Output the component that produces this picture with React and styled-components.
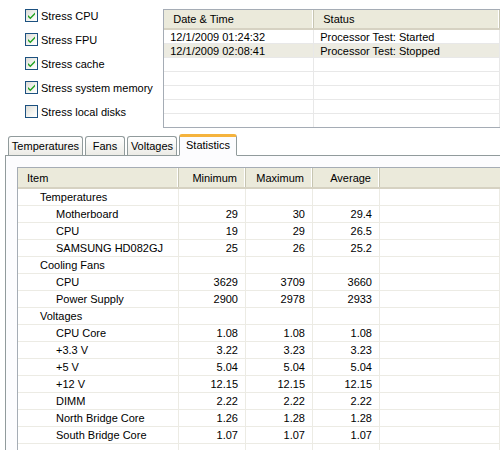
import React from 'react';
import styled, { createGlobalStyle } from 'styled-components';

const Global = createGlobalStyle`
    html, body {
        margin: 0;
        padding: 0;
        background: #fff;
    }
    body {
        width: 500px;
        height: 450px;
        overflow: hidden;
        font-family: Tahoma, "Liberation Sans", Arial, sans-serif;
        font-size: 11px;
        color: #000;
    }
`;

const Window = styled.div`
    width: 500px;
    height: 450px;
    overflow: hidden;
    background: #fff;
`;

const Top = styled.div`
    display: flex;
    height: 132px;
`;

const Checks = styled.div`
    width: 140px;
    padding: 9px 0 0 25px;
    display: flex;
    flex-direction: column;
    gap: 11px;
`;

const CheckRow = styled.label`
    display: flex;
    align-items: center;
    gap: 3px;
    height: 13px;
    white-space: nowrap;
`;

const Box = styled.span`
    width: 11px;
    height: 11px;
    border: 1px solid #1c5180;
    background: linear-gradient(135deg, #dcdcd7 0%, #f5f5f1 60%, #fff 100%);
    display: flex;
    align-items: center;
    justify-content: center;
    flex-shrink: 0;
`;

const LogList = styled.div`
    margin-top: 9px;
    width: 340px;
    height: 117px;
    border: 1px solid #a5acb5;
    border-right: none;
    background: #fff;
    overflow: hidden;
`;

const LogHeader = styled.div`
    display: grid;
    grid-template-columns: 150px 1fr;
    height: 18px;
    background: #ebeadb;
    border-bottom: 2px solid #d6d2c2;
`;

const HeadCell = styled.div`
    display: flex;
    align-items: center;
    justify-content: ${p => (p.$right ? 'flex-end' : 'flex-start')};
    padding: ${p => (p.$right ? '0 8px 0 0' : '0 0 0 9px')};
    border-right: 1px solid #c7c5b2;
    box-shadow: inset -1px 0 0 #fff;
    white-space: nowrap;
`;

const LogRow = styled.div`
    display: grid;
    grid-template-columns: 150px 1fr;
    height: 13px;
    background: ${p => (p.$selected ? '#ecebe1' : '#fff')};
    border-bottom: 1px solid #e8e8e8;
`;

const LogCell = styled.div`
    padding-left: 6px;
    line-height: 14px;
    border-right: 1px solid #e8e8e8;
    white-space: nowrap;
`;

const TabStrip = styled.div`
    display: flex;
    align-items: flex-end;
    gap: 2px;
    height: 23px;
    padding-left: 8px;
    position: relative;
    z-index: 1;
`;

const Tab = styled.div`
    width: ${p => p.$w}px;
    height: ${p => (p.$active ? 22 : 19)}px;
    box-sizing: border-box;
    border: 1px solid #919b9c;
    border-bottom: ${p => (p.$active ? '1px solid #fcfcfe' : 'none')};
    border-radius: 3px 3px 0 0;
    background: ${p => (p.$active ? '#fcfcfe' : 'linear-gradient(#fff, #ecebe6)')};
    border-top: ${p => (p.$active ? '3px solid #f5b33d' : '1px solid #919b9c')};
    margin-bottom: ${p => (p.$active ? '-1px' : '0')};
    display: flex;
    align-items: center;
    justify-content: center;
    padding-bottom: ${p => (p.$active ? '2px' : '0')};
    white-space: nowrap;
`;

const Panel = styled.div`
    margin-left: 5px;
    border: 1px solid #919b9c;
    border-right: none;
    border-bottom: none;
    background: #fcfcfe;
    padding: 11px 0 0 11px;
    height: 300px;
`;

const Table = styled.div`
    border: 1px solid #a5acb5;
    border-right: none;
    border-bottom: none;
    background: #fff;
    height: 300px;
`;

const cols = '161px 67px 67px 67px 1fr';

const TableHead = styled.div`
    display: grid;
    grid-template-columns: ${cols};
    height: 19px;
    background: #ebeadb;
    border-bottom: 2px solid #d6d2c2;
`;

const Row = styled.div`
    display: grid;
    grid-template-columns: ${cols};
    height: 16px;
    border-bottom: 1px solid #ecebe4;
`;

const Cell = styled.div`
    display: flex;
    align-items: center;
    justify-content: ${p => (p.$right ? 'flex-end' : 'flex-start')};
    padding: ${p => (p.$right ? '0 7px 0 0' : `0 0 0 ${p.$indent || 0}px`)};
    border-right: 1px solid #ecebe4;
    white-space: nowrap;
`;

const Check = ({ on }) => (
    <Box>
        {on && (
            <svg width="9" height="9" viewBox="0 0 9 9">
                <path d="M1 4 L3.3 6.3 L8 1.6 L8 3.6 L3.3 8.3 L1 6 Z" fill="#21a121" />
            </svg>
        )}
    </Box>
);

const checks = [
    ['Stress CPU', true],
    ['Stress FPU', true],
    ['Stress cache', true],
    ['Stress system memory', true],
    ['Stress local disks', false],
];

const log = [
    ['12/1/2009 01:24:32', 'Processor Test: Started'],
    ['12/1/2009 02:08:41', 'Processor Test: Stopped'],
    ['', ''],
    ['', ''],
    ['', ''],
    ['', ''],
    ['', ''],
];

const tabs = [
    ['Temperatures', 75],
    ['Fans', 40],
    ['Voltages', 50],
    ['Statistics', 58, true],
];

const stats = [
    { name: 'Temperatures', group: true },
    { name: 'Motherboard', v: ['29', '30', '29.4'] },
    { name: 'CPU', v: ['19', '29', '26.5'] },
    { name: 'SAMSUNG HD082GJ', v: ['25', '26', '25.2'] },
    { name: 'Cooling Fans', group: true },
    { name: 'CPU', v: ['3629', '3709', '3660'] },
    { name: 'Power Supply', v: ['2900', '2978', '2933'] },
    { name: 'Voltages', group: true },
    { name: 'CPU Core', v: ['1.08', '1.08', '1.08'] },
    { name: '+3.3 V', v: ['3.22', '3.23', '3.23'] },
    { name: '+5 V', v: ['5.04', '5.04', '5.04'] },
    { name: '+12 V', v: ['12.15', '12.15', '12.15'] },
    { name: 'DIMM', v: ['2.22', '2.22', '2.22'] },
    { name: 'North Bridge Core', v: ['1.26', '1.28', '1.28'] },
    { name: 'South Bridge Core', v: ['1.07', '1.07', '1.07'] },
    { name: '', v: ['', '', ''] },
];

function App() {
    return (
        <Window>
            <Global />
            <Top>
                <Checks>
                    {checks.map(([label, on]) => (
                        <CheckRow key={label}>
                            <Check on={on} />
                            {label}
                        </CheckRow>
                    ))}
                </Checks>
                <LogList>
                    <LogHeader>
                        <HeadCell>Date &amp; Time</HeadCell>
                        <HeadCell>Status</HeadCell>
                    </LogHeader>
                    {log.map((r, i) => (
                        <LogRow key={i} $selected={i === 1}>
                            <LogCell>{r[0]}</LogCell>
                            <LogCell>{r[1]}</LogCell>
                        </LogRow>
                    ))}
                </LogList>
            </Top>
            <TabStrip>
                {tabs.map(([t, w, active]) => (
                    <Tab key={t} $w={w} $active={active}>{t}</Tab>
                ))}
            </TabStrip>
            <Panel>
                <Table>
                    <TableHead>
                        <HeadCell>Item</HeadCell>
                        <HeadCell $right>Minimum</HeadCell>
                        <HeadCell $right>Maximum</HeadCell>
                        <HeadCell $right>Average</HeadCell>
                        <div />
                    </TableHead>
                    {stats.map((s, i) => (
                        <Row key={i}>
                            <Cell $indent={s.group ? 22 : 38}>{s.name}</Cell>
                            {(s.v || ['', '', '']).map((v, j) => (
                                <Cell key={j} $right>{v}</Cell>
                            ))}
                            <Cell />
                        </Row>
                    ))}
                </Table>
            </Panel>
        </Window>
    );
}

export default App;
